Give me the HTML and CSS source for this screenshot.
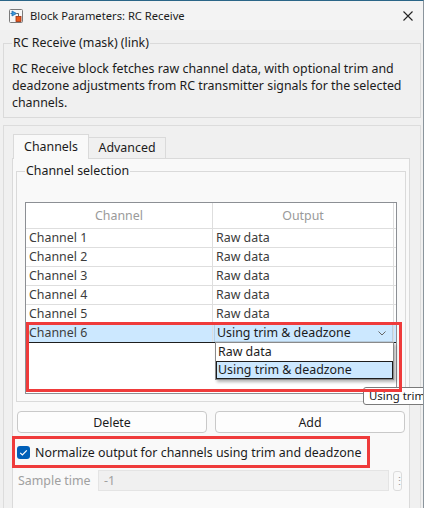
FILE: index.html
```html
<!DOCTYPE html>
<html>
<head>
<meta charset="utf-8">
<link rel="stylesheet" href="styles.css">
</head>
<body>
<div class="window">
  <div class="titlebar">
    <svg class="app-icon" width="14" height="14" viewBox="0 0 14 14">
      <rect x="0.5" y="0.5" width="13" height="13" rx="1" fill="#f7f7f7" stroke="#7a7a7a"/>
      <line x1="1.5" y1="4.5" x2="3" y2="4.5" stroke="#2f7fc0"/>
      <polygon points="3,2 3,7 7.5,4.5" fill="#3d9be0" stroke="#1f6aa8" stroke-width="0.8"/>
      <polyline points="7.5,4.5 9.5,4.5 9.5,7.5" fill="none" stroke="#555" stroke-width="0.9"/>
      <rect x="7" y="7.5" width="5" height="5" fill="#e85a1c" stroke="#9c2e10" stroke-width="0.8"/>
    </svg>
    <span class="title">Block Parameters: RC Receive</span>
    <svg class="close" width="10" height="10" viewBox="0 0 10 10">
      <path d="M0.5 0.5 L9.5 9.5 M9.5 0.5 L0.5 9.5" stroke="#222" stroke-width="1.1" fill="none"/>
    </svg>
  </div>
  <div class="main">
    <fieldset class="mask">
      <legend>RC Receive (mask) (link)</legend>
      <p class="desc">RC Receive block fetches raw channel data, with optional trim and<br>deadzone adjustments from RC transmitter signals for the selected<br>channels.</p>
    </fieldset>
    <div class="panel">
      <div class="tabbar">
        <div class="tab active">Channels</div>
        <div class="tab">Advanced</div>
      </div>
      <div class="pane">
        <fieldset class="chsel">
          <legend>Channel selection</legend>
          <div class="grid">
            <div class="row head"><div class="c1">Channel</div><div class="c2">Output</div></div>
            <div class="row"><div class="c1">Channel 1</div><div class="c2">Raw data</div></div>
            <div class="row"><div class="c1">Channel 2</div><div class="c2">Raw data</div></div>
            <div class="row"><div class="c1">Channel 3</div><div class="c2">Raw data</div></div>
            <div class="row"><div class="c1">Channel 4</div><div class="c2">Raw data</div></div>
            <div class="row"><div class="c1">Channel 5</div><div class="c2">Raw data</div></div>
            <div class="row sel">
              <div class="c1">Channel 6</div>
              <div class="c2">
                <div class="combo">
                  <span>Using trim &amp; deadzone</span>
                  <svg class="chev" width="8" height="5" viewBox="0 0 8 5"><path d="M0.5 0.5 L4 4 L7.5 0.5" fill="none" stroke="#666" stroke-width="1"/></svg>
                </div>
              </div>
            </div>
            <div class="popup">
              <div class="opt">Raw data</div>
              <div class="opt on">Using trim &amp; deadzone</div>
            </div>
            <div class="tooltip">Using trim</div>
            <div class="mark"></div>
          </div>
        </fieldset>
        <div class="buttons">
          <button class="btn">Delete</button>
          <button class="btn">Add</button>
        </div>
        <div class="norm">
          <span class="cb"><svg width="13" height="13" viewBox="0 0 13 13"><path d="M3.2 6.8 L5.4 9 L9.8 4.4" fill="none" stroke="#fff" stroke-width="1.2"/></svg></span>
          <span>Normalize output for channels using trim and deadzone</span>
        </div>
        <div class="sample">
          <span class="lbl">Sample time</span>
          <div class="input">-1</div>
          <div class="dots">⋮</div>
        </div>
      </div>
    </div>
  </div>
</div>
</body>
</html>
```

FILE: styles.css
```css
html, body {
  margin: 0;
  padding: 0;
}
body {
  font-family: "Noto Sans", "Open Sans", sans-serif;
  font-size: 12.4px;
  color: #1b1b1b;
  background: #f0f0f0;
}
.window {
  width: 424px;
  height: 508px;
  box-sizing: border-box;
  overflow: hidden;
  background: #f0f0f0;
  border-top: 1px solid #2a6587;
  border-right: 1px solid #8a949c;
}
.titlebar {
  height: 29px;
  display: flex;
  align-items: center;
  padding-left: 9px;
  background: #f3f3f3;
}
.title {
  margin-left: 7px;
  font-size: 11.2px;
  color: #1b1b1b;
}
.close {
  margin-left: auto;
  margin-right: 10px;
}
.main {
  padding: 0 2px 0 3px;
}
fieldset {
  min-width: 0;
  margin: 0;
}
legend {
  padding: 0 1px;
  line-height: 16px;
}
.mask {
  margin-top: 5px;
  padding: 9px 8px 6px;
  border: 1px solid #dadada;
}
.desc {
  margin: 0;
  line-height: 17px;
  white-space: nowrap;
}
.panel {
  margin-top: 7px;
  border: 1px solid #dcdcdc;
  padding: 8px 10px 0 8px;
  height: 420px;
}
.tabbar {
  display: flex;
  align-items: flex-end;
  height: 24px;
  padding-left: 1px;
}
.tab {
  box-sizing: border-box;
  height: 21px;
  width: 77px;
  border: 1px solid #dadada;
  border-left: 0;
  border-bottom: 0;
  text-align: center;
  line-height: 20px;
  background: #f0f0f0;
}
.tab.active {
  height: 25px;
  width: 76px;
  margin-bottom: -1px;
  border-left: 1px solid #dadada;
  background: #f9f9f9;
  position: relative;
  z-index: 1;
  line-height: 24px;
}
.pane {
  border: 1px solid #dadada;
  background: #f9f9f9;
  padding: 4px 3px 0;
  height: 400px;
}
.chsel {
  padding: 23px 8px 7px;
  border: 1px solid #dadada;
}
.grid {
  position: relative;
  height: 190px;
  border: 1px solid #8c8f94;
  background: #fff;
}
.row {
  display: flex;
  height: 19px;
  box-sizing: border-box;
  border-bottom: 1px solid #dedede;
  color: #3c3c3c;
  line-height: 18px;
}
.row .c1 {
  box-sizing: border-box;
  width: 187px;
  border-right: 1px solid #dedede;
  padding-left: 3px;
}
.row .c2 {
  box-sizing: border-box;
  width: 181px;
  border-right: 1px solid #dedede;
  padding-left: 3px;
  position: relative;
}
.row.head {
  height: 26px;
  line-height: 25px;
  color: #9a9a9a;
}
.row.head .c1,
.row.head .c2 {
  text-align: center;
  padding-left: 0;
}
.row.sel {
  border-bottom: 1px solid #1e1e1e;
  background: #cce8ff;
}
.row.sel .c2 {
  padding-left: 0;
}
.combo {
  box-sizing: border-box;
  height: 18px;
  margin-left: 1px;
  width: 179px;
  display: flex;
  align-items: center;
  justify-content: space-between;
  padding: 0 6px 0 2px;
  background: #cce8ff;
  border: 1px solid #b9cfe0;
  color: #1b1b1b;
}
.chev {
  display: block;
}
.popup {
  position: absolute;
  left: 189px;
  top: 139px;
  width: 179px;
  box-sizing: border-box;
  border: 1px solid #8a8a8a;
  background: #fff;
  box-shadow: 2px 2px 3px rgba(0, 0, 0, 0.3);
  z-index: 2;
}
.opt {
  height: 18px;
  line-height: 17px;
  padding-left: 2px;
  box-sizing: border-box;
  color: #1b1b1b;
}
.opt.on {
  background: #cce8ff;
  border: 1px solid #1e1e1e;
  padding-left: 1px;
  line-height: 15px;
}
.tooltip {
  position: absolute;
  left: 337px;
  top: 184px;
  height: 18px;
  box-sizing: border-box;
  padding: 0 30px 0 5px;
  font-size: 11.4px;
  line-height: 16px;
  white-space: nowrap;
  background: #fff;
  border: 1px solid #7a7a7a;
  border-radius: 3px;
  z-index: 3;
  color: #1b1b1b;
}
.mark {
  position: absolute;
  left: 0;
  top: 119px;
  width: 376px;
  height: 70px;
  box-sizing: border-box;
  border: 3px solid #ef3b3b;
  z-index: 4;
}
.buttons {
  display: grid;
  grid-template-columns: 1fr 1fr;
  gap: 8px;
  margin-top: 9px;
  padding: 0 1px;
}
.btn {
  height: 22px;
  border: 1px solid #c9c9c9;
  border-radius: 4px;
  background: #fdfdfd;
  font-family: inherit;
  font-size: 12.4px;
  color: #1b1b1b;
  padding: 0;
}
.norm {
  display: flex;
  align-items: center;
  gap: 5px;
  width: 358px;
  height: 32px;
  box-sizing: border-box;
  border: 3px solid #ef3b3b;
  margin: 3px 0 0 -4px;
  padding-left: 2px;
  white-space: nowrap;
}
.cb {
  width: 13px;
  height: 13px;
  border-radius: 3px;
  background: #005fb8;
  display: block;
}
.cb svg {
  display: block;
}
.sample {
  display: flex;
  align-items: center;
  margin-top: 2px;
  padding-left: 2px;
  height: 21px;
}
.lbl {
  width: 80px;
  color: #a0a0a0;
}
.input {
  width: 291px;
  height: 21px;
  box-sizing: border-box;
  border: 1px solid #e4e4e4;
  background: #f0f0f0;
  color: #a0a0a0;
  padding-left: 5px;
  line-height: 19px;
}
.dots {
  margin-left: 4px;
  width: 9px;
  height: 20px;
  box-sizing: border-box;
  border: 1px solid #dcdcdc;
  border-radius: 3px;
  color: #999;
  text-align: center;
  line-height: 18px;
  font-size: 11px;
}
```
